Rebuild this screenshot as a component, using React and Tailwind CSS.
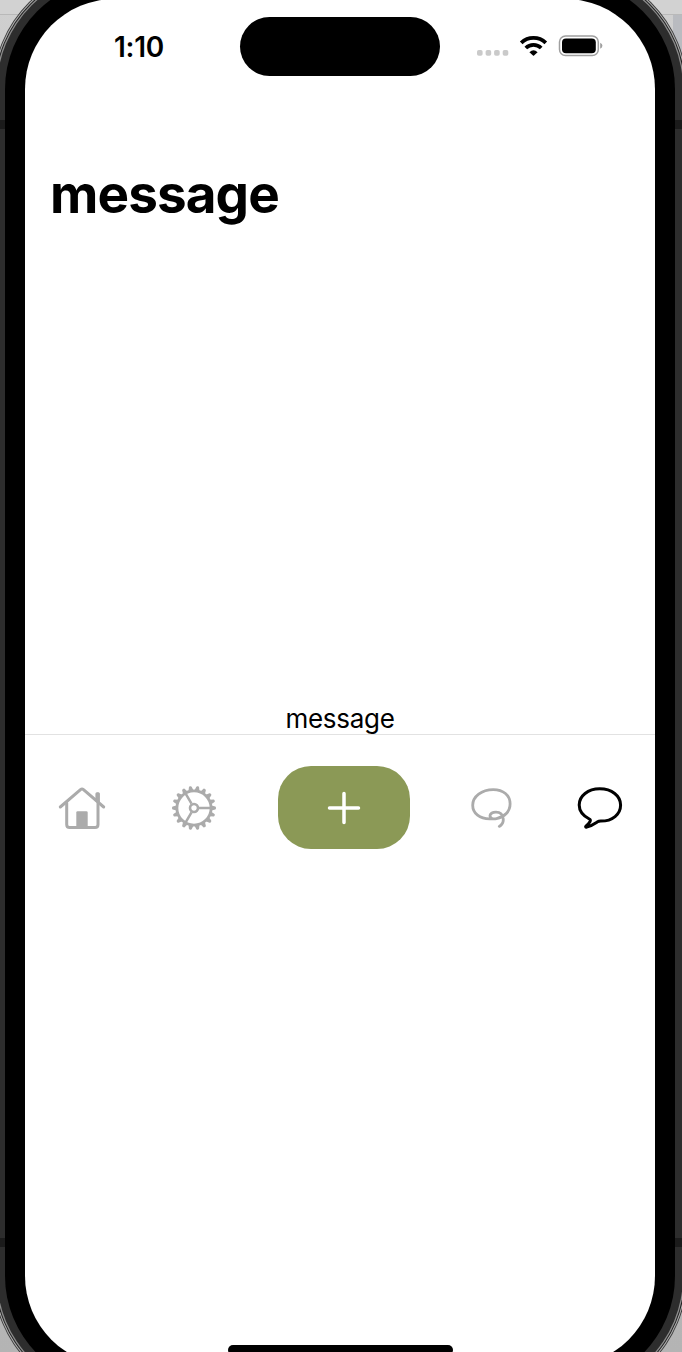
function HouseIcon() {
  return (
    <svg width="50" height="46" viewBox="57 785 50 46" fill="none" stroke="#ababab" strokeWidth="3" strokeLinecap="round" strokeLinejoin="round">
      <path d="M60.3 807 80.5 789.6q1.5-1.2 3 0L103.7 807" />
      <path d="M66.7 803v21.5q0 3 3 3H95q3 0 3-3V803" />
      <path d="M96 801v-7.2q0-1 1-1h1.3q1 0 1 1V803Z" fill="#ababab" strokeWidth="1.2" />
      <path d="M76.3 827v-14.5q0-1.3 1.3-1.3h8.8q1.3 0 1.3 1.3V827Z" fill="#ababab" stroke="none" />
    </svg>
  );
}

const teeth = Array.from({ length: 18 }, (_, i) => i * 20 + 10);

function GearIcon() {
  return (
    <svg width="46" height="46" viewBox="-23 -23 46 46" fill="none" stroke="#ababab">
      <circle r="17.1" strokeWidth="2.8" />
      <circle r="4" strokeWidth="2.6" />
      <path d="M5 0H17M-2.5-4.3-8.5-14.7M-2.5 4.3-8.5 14.7" strokeWidth="2.5" />
      {teeth.map((a) => (
        <path key={a} d="M-2.5-17.5-1.4-21.3q.2-.7 1.4-.7t1.4.7L2.5-17.5Z" transform={`rotate(${a})`} fill="#ababab" stroke="none" />
      ))}
    </svg>
  );
}

function LassoIcon() {
  return (
    <svg width="44" height="44" viewBox="469 786 44 44" fill="none" stroke="#ababab" strokeWidth="2.8" strokeLinecap="round">
      <path d="M499.3 826.4C502.3 824.8 503.6 821.8 503.2 818.6C502.7 814.4 499.8 812.1 496 812.1C492.3 812.1 489.8 813.9 490 816C490.2 818.5 493 819.2 496.5 818.6C504.5 817.2 510.1 811.5 510.1 803.8C510.1 795.3 503.3 789.6 493.3 789.6C481.7 789.6 472.7 796.5 472.7 805.2C472.7 813.6 480 818.9 489.6 818.9C492 818.9 494 818.9 496.5 818.6" />
    </svg>
  );
}

function BubbleIcon() {
  return (
    <svg width="48" height="44" viewBox="576 786 48 44" fill="none" stroke="#000" strokeWidth="3" strokeLinejoin="round">
      <path d="M599.7 788.8C588 788.8 579.2 796 579.2 805C579.2 811 583 815.7 589.3 819C590.5 819.6 590.7 820.4 590 821.6C588.5 824 587.2 825 586 826.1C585.2 827 585.7 827.4 586.7 827.1C591.4 826 594.2 824 597.5 821.8C598.5 821.2 599.4 821.1 600.7 821.1C612.5 821.2 620.6 814.3 620.6 805C620.6 795.8 611.8 788.8 599.7 788.8Z" />
    </svg>
  );
}

function StatusIcons() {
  return (
    <svg width="130" height="26" viewBox="475 33 130 26">
      <g fill="#cacaca">
        <rect x="477" y="50" width="5.6" height="5.8" rx="1.8" />
        <rect x="485.6" y="50" width="5.6" height="5.8" rx="1.8" />
        <rect x="494.1" y="50" width="5.6" height="5.8" rx="1.8" />
        <rect x="502.7" y="50" width="5.6" height="5.8" rx="1.8" />
      </g>
      <g fill="none" stroke="#000" strokeWidth="3.8">
        <path d="M521.2 42.8a18 18 0 0 1 24.6 0" />
        <path d="M525.8 48a11 11 0 0 1 15.4 0" />
      </g>
      <path d="M529.4 52.2q4.1-3.8 8.2 0L534 55.6q-.5.4-1 0Z" />
      <rect x="559.5" y="36" width="38.8" height="19.5" rx="6" fill="none" stroke="#9f9f9f" strokeWidth="1.5" />
      <rect x="562" y="38.4" width="33.8" height="14.8" rx="4" />
      <path d="M600.2 42.8q2.2.8 2.2 3t-2.2 3Z" fill="#9f9f9f" />
    </svg>
  );
}

export default function App() {
  return (
    <div className="relative h-[1352px] w-[682px] overflow-hidden bg-linear-to-b from-[#cfcfcf] to-[#b4b4b4] font-['Inter',sans-serif] text-black">
      <div className="absolute top-0 left-0 h-[15px] w-full border-b border-[#b9b9b9] bg-[#d2d2d2]" />
      <div className="absolute top-[15px] right-0 h-[200px] w-[9px] bg-[#b9bbc0]" />
      <div className="relative -mt-[21px] ml-[5px] h-[1407px] w-[670px] rounded-[110px] bg-black p-5 shadow-[0_0_0_8px_#2d2d2d,0_0_0_9.3px_#8d8d8d,0_0_0_10.3px_#202020,0_0_0_11.3px_#b0b0b0,0_0_0_12.2px_#3a3a3a]">
        <main className="flex h-full flex-col rounded-[90px] bg-white">
          <header className="flex h-[96px] pt-[18px]">
            <time className="mt-[14px] ml-[89px] w-[126px] text-[28px] leading-8 font-semibold tracking-[-0.3px]">1:10</time>
            <div className="h-[59px] w-[200px] rounded-full bg-black" />
            <div className="mt-4 ml-[35px]"><StatusIcons /></div>
          </header>
          <h1 className="mt-[67px] ml-[25px] text-[53px] leading-[64px] font-bold tracking-[-0.9px]">message</h1>
          <p className="mt-[477px] text-center text-[26px] leading-[31px] tracking-[-0.3px]">message</p>
          <nav className="flex h-[146px] items-center justify-between border-t border-[#e2e2e2] pr-[31px] pl-8">
            <button className="mr-[18px]"><HouseIcon /></button>
            <button className="mr-[16px]"><GearIcon /></button>
            <button className="flex h-[83px] w-[132px] items-center justify-center rounded-[33px] bg-[#8b9956]">
              <svg width="34" height="34" viewBox="0 0 34 34" stroke="#fff" strokeWidth="3.5" strokeLinecap="round"><path d="M17 2.5v29M2.5 17h29" /></svg>
            </button>
            <button className="ml-[13px]"><LassoIcon /></button>
            <button className="ml-[18px]"><BubbleIcon /></button>
          </nav>
        </main>
      </div>
      <div className="absolute top-[120px] left-0 h-[9px] w-[5px] bg-[#1b1b1b]" />
      <div className="absolute top-[120px] right-0 h-[9px] w-[7px] bg-[#1b1b1b]" />
      <div className="absolute top-[1238px] left-0 h-[9px] w-[5px] bg-[#1b1b1b]" />
      <div className="absolute top-[1238px] right-0 h-[9px] w-[7px] bg-[#1b1b1b]" />
      <div className="absolute top-[1345px] left-[228px] h-[10px] w-[225px] rounded-full bg-black" />
    </div>
  );
}
